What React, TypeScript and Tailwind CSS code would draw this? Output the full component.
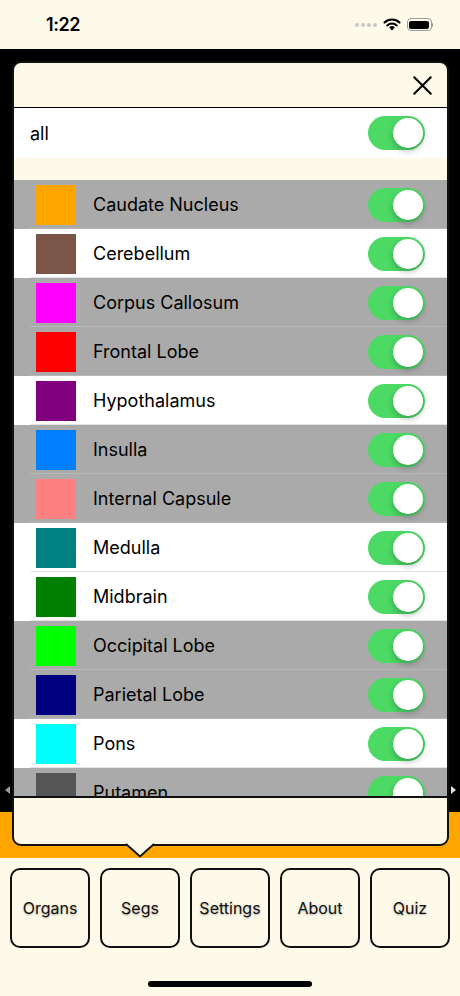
import { X } from 'lucide-react'

const segs = [
  { name: 'Caudate Nucleus', color: '#ffa500', gray: true },
  { name: 'Cerebellum', color: '#7b5548', gray: false },
  { name: 'Corpus Callosum', color: '#ff00ff', gray: true },
  { name: 'Frontal Lobe', color: '#ff0000', gray: true },
  { name: 'Hypothalamus', color: '#800080', gray: false },
  { name: 'Insulla', color: '#0080ff', gray: true },
  { name: 'Internal Capsule', color: '#ff8080', gray: true },
  { name: 'Medulla', color: '#008080', gray: false },
  { name: 'Midbrain', color: '#008000', gray: false },
  { name: 'Occipital Lobe', color: '#00ff00', gray: true },
  { name: 'Parietal Lobe', color: '#000080', gray: true },
  { name: 'Pons', color: '#00ffff', gray: false },
  { name: 'Putamen', color: '#555555', gray: true },
]

const tabs = ['Organs', 'Segs', 'Settings', 'About', 'Quiz']

function Toggle() {
  return (
    <div className="w-[57px] h-[34px] rounded-full bg-[#4cd964] flex items-center justify-end pr-[2px] shrink-0">
      <div className="w-[30px] h-[30px] rounded-full bg-white shadow-[0_3px_6px_rgba(0,0,0,0.25)]" />
    </div>
  )
}

function StatusBar() {
  return (
    <div className="h-[49px] bg-[#fefaea] flex items-center justify-between pl-[46px] pr-[27px] shrink-0">
      <span className="text-[18px] font-semibold text-black tracking-tight">1:22</span>
      <div className="flex items-center gap-[6px]">
        <div className="flex items-center gap-[2px]">
          {[0, 1, 2, 3].map((i) => (
            <div key={i} className="w-[4px] h-[4px] rounded-full bg-[#c8c8c8]" />
          ))}
        </div>
        <svg width="18" height="13" viewBox="0 0 18 13">
          <path d="M9 12.5 L6.2 9.4 A4 4 0 0 1 11.8 9.4 Z" fill="black" />
          <path d="M4.3 7.4 A6.8 6.8 0 0 1 13.7 7.4" stroke="black" strokeWidth="2.1" fill="none" strokeLinecap="round" />
          <path d="M1.5 4.6 A10.8 10.8 0 0 1 16.5 4.6" stroke="black" strokeWidth="2.1" fill="none" strokeLinecap="round" />
        </svg>
        <div className="flex items-center">
          <div className="w-[25px] h-[13px] rounded-[4px] border border-[#999] p-[1.5px]">
            <div className="w-full h-full rounded-[2px] bg-black" />
          </div>
          <div className="w-[1.5px] h-[4px] bg-[#999] rounded-r" />
        </div>
      </div>
    </div>
  )
}

export default function App() {
  return (
    <div className="w-[460px] h-[996px] bg-[#fefaea] flex flex-col relative overflow-hidden font-['Inter','Liberation_Sans',sans-serif]">
      <StatusBar />
      <div className="h-[763px] bg-black shrink-0" />
      <div className="h-[46px] bg-[#ffa500] shrink-0" />
      <div className="flex gap-[10px] px-[10px] pt-[10px]">
        {tabs.map((t) => (
          <div
            key={t}
            className="w-[80px] h-[80px] rounded-[10px] border-2 border-[#111] flex items-center justify-center text-[16px] text-[#111] [text-shadow:0_1px_2px_rgba(0,0,0,0.3)]"
          >
            {t}
          </div>
        ))}
      </div>
      <div className="flex justify-center pt-[33px]">
        <div className="w-[164px] h-[6px] rounded-full bg-black" />
      </div>

      {/* scroll hints */}
      <svg className="absolute left-[5px] top-[786px]" width="5" height="8" viewBox="0 0 5 8">
        <path d="M5 0 L0 4 L5 8 Z" fill="#9a9a9a" />
      </svg>
      <svg className="absolute left-[451px] top-[786px]" width="5" height="8" viewBox="0 0 5 8">
        <path d="M0 0 L5 4 L0 8 Z" fill="#e0e0e0" />
      </svg>

      {/* popover */}
      <div className="absolute left-[12px] top-[61px] w-[437px] h-[785px] rounded-[9px] border-2 border-[#111] bg-[#fefaea] flex flex-col overflow-hidden">
        <div className="h-[45px] flex items-center justify-end pr-[8px] border-b border-black shrink-0">
          <X size={33} strokeWidth={1.5} color="#000" />
        </div>
        <div className="h-[50px] bg-white flex items-center justify-between pl-[16px] pr-[22px] shrink-0">
          <span className="text-[18px] text-black">all</span>
          <Toggle />
        </div>
        <div className="h-[22px] shrink-0" />
        <div className="h-[616px] overflow-hidden shrink-0">
          {segs.map((s) => (
            <div
              key={s.name}
              className={`h-[49px] flex items-center pl-[22px] pr-[22px] relative ${s.gray ? 'bg-[#aaaaaa]' : 'bg-white'}`}
            >
              <div className="w-[40px] h-[40px] shrink-0" style={{ background: s.color }} />
              <span className="ml-[17px] flex-1 text-[18px] text-black">{s.name}</span>
              <Toggle />
              <div className={`absolute left-[16px] right-0 bottom-0 h-px ${s.gray ? 'bg-[#b8b8b8]' : 'bg-[#e4e4e4]'}`} />
            </div>
          ))}
        </div>
        <div className="flex-1 border-t-2 border-[#111]" />
      </div>
      <svg className="absolute left-[126px] top-[842px]" width="28" height="16" viewBox="0 0 28 16">
        <path d="M0 2 L14 14.5 L28 2" fill="#fefaea" stroke="#111" strokeWidth="2" />
        <rect x="2" y="0" width="24" height="2.5" fill="#fefaea" />
      </svg>
    </div>
  )
}
